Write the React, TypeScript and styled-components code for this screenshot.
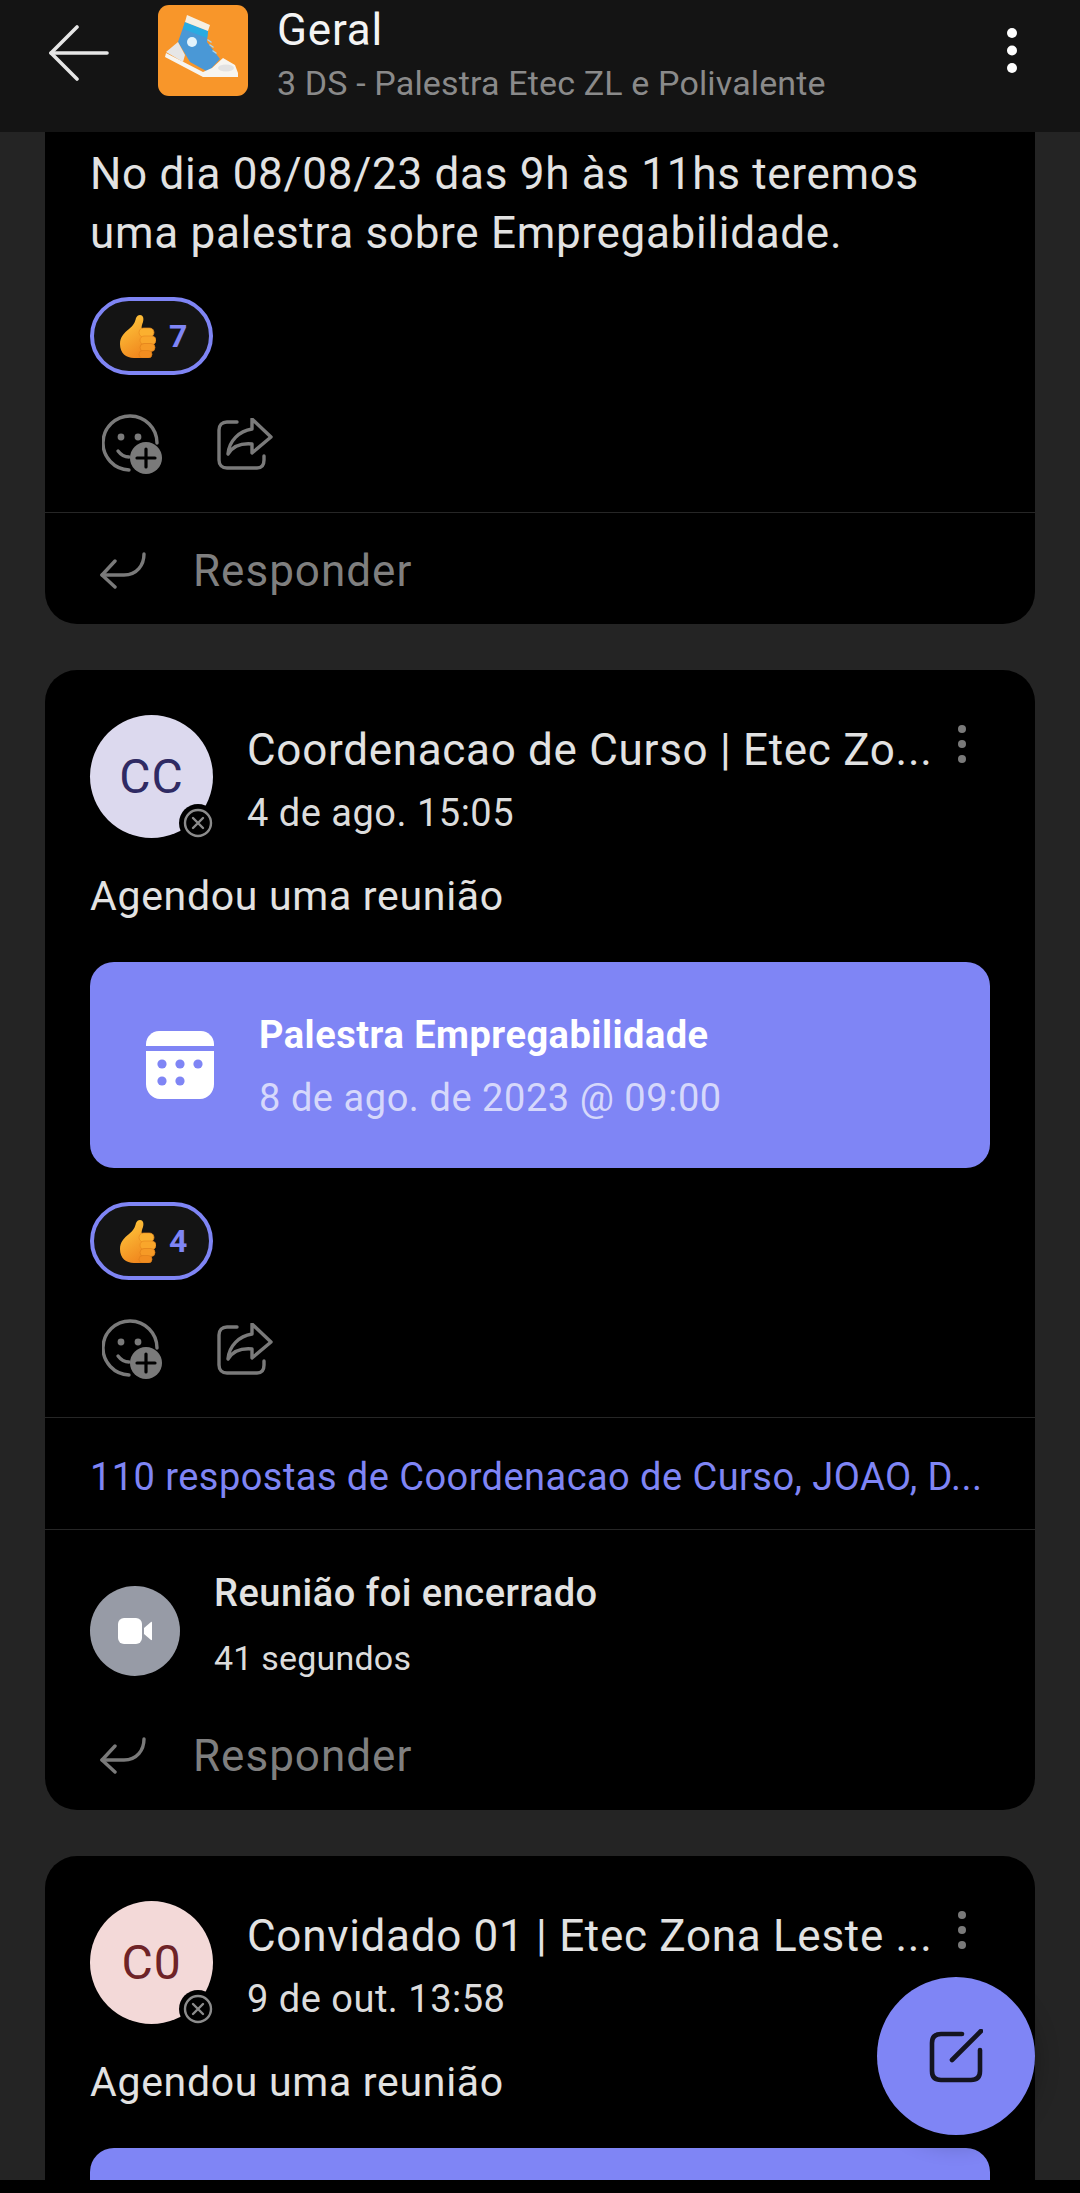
import React from 'react'
import styled, { createGlobalStyle } from 'styled-components'

const Global = createGlobalStyle`
    html, body {
        margin: 0;
        padding: 0;
        background: #000;
    }
    * {
        box-sizing: border-box;
    }
`

const ACCENT = '#7f85f5'

const BackIcon = () => (
    <svg width="60" height="56" viewBox="0 0 60 56" fill="none" stroke="#e6e6e6" strokeWidth="3.6" strokeLinecap="round" strokeLinejoin="round">
        <path d="M58 28H2" />
        <path d="M28 2L2 28L28 54" />
    </svg>
)

const SneakerLogo = () => (
    <svg width="90" height="91" viewBox="0 0 90 91">
        <rect width="90" height="91" rx="11" fill="#f8962a" />
        <path d="M27 17L50 26L49 37L62 54L50 67L32 57L20 37Z" fill="#4a98d6" />
        <path d="M27 17L50 26L49 33L25 24Z" fill="#29abe2" />
        <path d="M29 10L52 20L50 26L27 17Z" fill="#f5efe2" />
        <path d="M8 47L20 37L27 50L25 57Z" fill="#e6e6e6" />
        <path d="M8 48L45 67L54 63L65 53L77 60L80 68V72H45L7 52Z" fill="#f7f5f0" />
        <ellipse cx="68" cy="63" rx="8" ry="3.5" fill="#e2e2e2" />
        <circle cx="34" cy="37" r="5" fill="#e3f3fb" />
        <path d="M50 35L53 37M52 40L55 42M55 46L58 48" stroke="#a9d6f0" strokeWidth="1.500" strokeLinecap="round" />
    </svg>
)

const MoreDots = ({ r, step, color }: { r: number; step: number; color: string }) => (
    <svg width={r * 2} height={r * 2 + step * 2} fill={color}>
        <circle cx={r} cy={r} r={r} />
        <circle cx={r} cy={r + step} r={r} />
        <circle cx={r} cy={r + step * 2} r={r} />
    </svg>
)

const ThumbEmoji = () => (
    <svg width="36" height="44" viewBox="0 0 36 44">
        <defs>
            <linearGradient id="thumbFill" x1="0.3" y1="0" x2="0.7" y2="1">
                <stop offset="0" stopColor="#ffc73c" />
                <stop offset="1" stopColor="#f0861d" />
            </linearGradient>
        </defs>
        <path d="M20 1C23 1 24 4 23 8C22 11 21 13 22 15L26 44H14C6 44 0 39 0 30C0 23 4 19 9 15C14 11 15 8 16 4C17 2 18 1 20 1Z" fill="url(#thumbFill)" />
        <rect x="19" y="14" width="15" height="9" rx="4.500" fill="#fbb02f" stroke="#e8891f" strokeWidth="0.700" />
        <rect x="20" y="22" width="16" height="8.500" rx="4.200" fill="#f9a62b" stroke="#e8891f" strokeWidth="0.700" />
        <rect x="20" y="29.500" width="15" height="8" rx="4" fill="#f69a26" stroke="#e07f1a" strokeWidth="0.700" />
        <rect x="19" y="36.500" width="13" height="7.500" rx="3.700" fill="#f18d20" stroke="#e07f1a" strokeWidth="0.700" />
    </svg>
)

const AddReactionIcon = () => (
    <svg width="60" height="60" viewBox="0 0 60 60" fill="none">
        <path d="M27 56A27 27 0 1 1 55 29" stroke="#7a7a7a" strokeWidth="3.400" strokeLinecap="round" />
        <circle cx="19" cy="23" r="3.400" fill="#7a7a7a" />
        <circle cx="36" cy="23" r="3.400" fill="#7a7a7a" />
        <path d="M16 37C19 41 23 43 27 43" stroke="#7a7a7a" strokeWidth="3.400" strokeLinecap="round" />
        <circle cx="44" cy="44" r="16" fill="#7a7a7a" />
        <path d="M44 35V53M35 44H53" stroke="#000" strokeWidth="3.200" strokeLinecap="round" />
    </svg>
)

const ShareIcon = () => (
    <svg width="56" height="52" viewBox="0 0 56 52" fill="none" stroke="#7a7a7a" strokeWidth="3.400" strokeLinecap="round" strokeLinejoin="round">
        <path d="M20 4H10C5 4 2 7 2 12V42C2 47 5 50 10 50H40C45 50 47 47 47 42V38" />
        <path d="M35 1L54 19L35 35V26C24 25 16 28 11 36C12 23 22 13 35 11Z" />
    </svg>
)

const ReplyIcon = () => (
    <svg width="46" height="38" viewBox="0 0 46 38" fill="none" stroke="#7a7a7a" strokeWidth="3.400" strokeLinecap="round" strokeLinejoin="round">
        <path d="M44 2C44 13 37 23 24 23H2" />
        <path d="M15 9L2 23L15 35" />
    </svg>
)

const CalendarIcon = () => (
    <svg width="68" height="68" viewBox="0 0 68 68" fill="#fff">
        <path d="M13 0H55C62 0 68 6 68 13V15H0V13C0 6 6 0 13 0Z" />
        <path d="M0 20H68V53C68 61 62 68 54 68H14C6 68 0 61 0 53Z" />
        <g fill={ACCENT}>
            <circle cx="16" cy="33" r="4.600" />
            <circle cx="34" cy="33" r="4.600" />
            <circle cx="52" cy="33" r="4.600" />
            <circle cx="16" cy="50" r="4.600" />
            <circle cx="34" cy="50" r="4.600" />
        </g>
    </svg>
)

const VideoIcon = () => (
    <svg width="34" height="26" viewBox="0 0 34 26" fill="#fff">
        <rect width="24" height="26" rx="6" />
        <path d="M26 10L33 4C33.600 3.600 34 4 34 4.600V21.400C34 22 33.600 22.400 33 22L26 16Z" />
    </svg>
)

const ComposeIcon = () => (
    <svg width="54" height="54" viewBox="0 0 54 54" fill="none" stroke="#141420" strokeWidth="4.600" strokeLinecap="round" strokeLinejoin="round">
        <path d="M33 5H12C6 5 3 8 3 14V42C3 48 6 51 12 51H42C48 51 51 48 51 42V21" />
        <path d="M52 2L23 31" />
    </svg>
)

const RemovedIcon = () => (
    <svg width="30" height="30" viewBox="0 0 30 30" fill="none" stroke="#8c8c8c" strokeWidth="2.400" strokeLinecap="round">
        <circle cx="15" cy="15" r="13" />
        <path d="M10 10L20 20M20 10L10 20" />
    </svg>
)

const App = () => {
    return (
        <Screen>
            <Global />
            <Header>
                <BackButton><BackIcon /></BackButton>
                <SneakerLogo />
                <HeaderText>
                    <ChannelName>Geral</ChannelName>
                    <TeamName>3 DS - Palestra Etec ZL e Polivalente</TeamName>
                </HeaderText>
                <HeaderMenu><MoreDots r={5} step={17.5} color="#fff" /></HeaderMenu>
            </Header>
            <Feed>
                <Card $cropped>
                    <Message>No dia 08/08/23 das 9h às 11hs teremos<br />uma palestra sobre Empregabilidade.</Message>
                    <Reaction count={7} />
                    <Actions />
                    <Divider />
                    <ReplyRow $tall />
                </Card>
                <Card>
                    <Author initials="CC" bg="#dcd9ee" fg="#2f2a63" name="Coordenacao de Curso | Etec Zo..." date="4 de ago. 15:05" />
                    <Scheduled>Agendou uma reunião</Scheduled>
                    <MeetingCard>
                        <CalendarIcon />
                        <MeetingText>
                            <MeetingTitle>Palestra Empregabilidade</MeetingTitle>
                            <MeetingDate>8 de ago. de 2023 @ 09:00</MeetingDate>
                        </MeetingText>
                    </MeetingCard>
                    <Reaction count={4} />
                    <Actions />
                    <Divider />
                    <RepliesLink>110 respostas de Coordenacao de Curso, JOAO, D...</RepliesLink>
                    <Divider />
                    <EndedRow>
                        <EndedBadge><VideoIcon /></EndedBadge>
                        <EndedText>
                            <EndedTitle>Reunião foi encerrado</EndedTitle>
                            <EndedSub>41 segundos</EndedSub>
                        </EndedText>
                    </EndedRow>
                    <ReplyRow />
                </Card>
                <Card>
                    <Author initials="C0" bg="#f3d9d8" fg="#6e2327" name="Convidado 01 | Etec Zona Leste ..." date="9 de out. 13:58" />
                    <Scheduled>Agendou uma reunião</Scheduled>
                    <MeetingCard />
                </Card>
            </Feed>
            <BottomEdge />
            <Fab><ComposeIcon /></Fab>
        </Screen>
    )
}

const Reaction = ({ count }: { count: number }) => (
    <Pill>
        <ThumbEmoji />
        <PillCount>{count}</PillCount>
    </Pill>
)

const Actions = () => (
    <ActionRow>
        <AddReactionIcon />
        <ShareIcon />
    </ActionRow>
)

const ReplyRow = ({ $tall }: { $tall?: boolean }) => (
    <Reply $tall={$tall}>
        <ReplyIcon />
        <ReplyLabel>Responder</ReplyLabel>
    </Reply>
)

const Author = (props: { initials: string; bg: string; fg: string; name: string; date: string }) => (
    <AuthorRow>
        <Avatar $bg={props.bg} $fg={props.fg}>
            {props.initials}
            <AvatarBadge><RemovedIcon /></AvatarBadge>
        </Avatar>
        <AuthorText>
            <AuthorName>{props.name}</AuthorName>
            <PostDate>{props.date}</PostDate>
        </AuthorText>
        <PostMenu><MoreDots r={4} step={15} color="#7a7a7a" /></PostMenu>
    </AuthorRow>
)

const Screen = styled.div`
    position: relative;
    display: flex;
    flex-direction: column;
    width: 1080px;
    height: 2193px;
    overflow: hidden;
    background: #242424;
    font-family: Roboto, "Liberation Sans", sans-serif;
    color: #e2e2e2;
`

const Header = styled.header`
    display: flex;
    flex: none;
    height: 132px;
    padding-top: 5px;
    background: #141414;
`

const BackButton = styled.div`
    width: 158px;
    padding: 20px 0 0 49px;
`

const HeaderText = styled.div`
    display: flex;
    flex: 1;
    flex-direction: column;
    padding-left: 29px;
`

const ChannelName = styled.div`
    font-size: 44px;
    line-height: 50px;
    letter-spacing: 0.800px;
    color: #f4f4f4;
`

const TeamName = styled.div`
    margin-top: 3px;
    font-size: 34px;
    line-height: 50px;
    letter-spacing: 0.150px;
    color: #8a8a8a;
`

const HeaderMenu = styled.div`
    width: 73px;
    padding-top: 23px;
`

const Feed = styled.main`
    display: flex;
    flex: 1;
    flex-direction: column;
    gap: 46px;
    min-height: 0;
    overflow: hidden;
    padding: 0 45px;
`

const Card = styled.article<{ $cropped?: boolean }>`
    flex: none;
    padding-top: ${p => (p.$cropped ? '0' : '45px')};
    border-radius: ${p => (p.$cropped ? '0 0 32px 32px' : '32px')};
    background: #000;
`

const Message = styled.p`
    margin: 0;
    padding: 13px 45px 0;
    font-size: 44px;
    line-height: 59px;
    letter-spacing: 0.700px;
    color: #e2e2e2;
`

const Pill = styled.div`
    display: flex;
    align-items: center;
    gap: 13px;
    width: 123px;
    height: 78px;
    margin: 34px 0 0 45px;
    padding-left: 26px;
    border: 4px solid ${ACCENT};
    border-radius: 39px;
    background: #141414;
`

const PillCount = styled.span`
    font-size: 32px;
    font-weight: 700;
    color: ${ACCENT};
`

const ActionRow = styled.div`
    display: flex;
    align-items: center;
    gap: 55px;
    height: 137px;
    padding-left: 57px;
`

const Divider = styled.hr`
    height: 1px;
    margin: 0;
    border: 0;
    background: #262626;
`

const Reply = styled.div<{ $tall?: boolean }>`
    display: flex;
    align-items: center;
    gap: 47px;
    height: ${p => (p.$tall ? '111px' : '108px')};
    padding: ${p => (p.$tall ? '5px' : '0')} 0 0 55px;
`

const ReplyLabel = styled.span`
    font-size: 44px;
    letter-spacing: 1px;
    color: #7f7f7f;
`

const AuthorRow = styled.div`
    display: flex;
    align-items: flex-start;
    padding: 0 69px 0 45px;
`

const Avatar = styled.div<{ $bg: string; $fg: string }>`
    position: relative;
    display: flex;
    flex: none;
    align-items: center;
    justify-content: center;
    width: 123px;
    height: 123px;
    border-radius: 50%;
    background: ${p => p.$bg};
    font-size: 48px;
    letter-spacing: 1px;
    color: ${p => p.$fg};
`

const AvatarBadge = styled.span`
    position: absolute;
    right: -4px;
    bottom: -4px;
    display: flex;
    align-items: center;
    justify-content: center;
    width: 38px;
    height: 38px;
    border-radius: 50%;
    background: #000;
`

const AuthorText = styled.div`
    flex: 1;
    min-width: 0;
    padding-left: 34px;
`

const AuthorName = styled.div`
    padding-top: 7px;
    font-size: 44px;
    line-height: 56px;
    letter-spacing: 0.700px;
    white-space: nowrap;
    color: #e2e2e2;
`

const PostDate = styled.div`
    margin-top: 12px;
    font-size: 38px;
    line-height: 46px;
    letter-spacing: 0.500px;
    color: #dcdcdc;
`

const PostMenu = styled.div`
    flex: none;
    width: 8px;
    padding-top: 10px;
`

const Scheduled = styled.p`
    margin: 0;
    padding: 32px 45px 0;
    font-size: 41px;
    line-height: 52px;
    letter-spacing: 0.700px;
    color: #e2e2e2;
`

const MeetingCard = styled.div`
    display: flex;
    align-items: center;
    gap: 45px;
    height: 206px;
    margin: 40px 45px 2px;
    padding-left: 56px;
    border-radius: 24px;
    background: ${ACCENT};
`

const MeetingText = styled.div`
    display: flex;
    flex-direction: column;
    gap: 21px;
    padding-top: 2px;
`

const MeetingTitle = styled.div`
    font-size: 38px;
    font-weight: 700;
    line-height: 42px;
    letter-spacing: 0.500px;
    color: #fff;
`

const MeetingDate = styled.div`
    font-size: 38px;
    line-height: 42px;
    letter-spacing: 0.550px;
    color: #d6d8fb;
`

const RepliesLink = styled.div`
    height: 111px;
    padding: 0 45px;
    font-size: 38px;
    line-height: 119px;
    letter-spacing: 0.450px;
    white-space: nowrap;
    color: ${ACCENT};
`

const EndedRow = styled.div`
    display: flex;
    align-items: flex-start;
    gap: 34px;
    height: 172px;
    padding: 56px 45px 0;
`

const EndedBadge = styled.div`
    display: flex;
    flex: none;
    align-items: center;
    justify-content: center;
    width: 90px;
    height: 90px;
    border-radius: 50%;
    background: #979ba6;
`

const EndedText = styled.div`
    margin-top: -15px;
`

const EndedTitle = styled.div`
    font-size: 38px;
    font-weight: 500;
    line-height: 44px;
    letter-spacing: 0.500px;
    color: #e2e2e2;
`

const EndedSub = styled.div`
    margin-top: 21px;
    font-size: 34px;
    line-height: 44px;
    letter-spacing: 0.200px;
    color: #dcdcdc;
`

const BottomEdge = styled.div`
    flex: none;
    height: 13px;
    background: #000;
`

const Fab = styled.button`
    position: absolute;
    top: 1977px;
    left: 877px;
    display: flex;
    align-items: center;
    justify-content: center;
    width: 158px;
    height: 158px;
    padding: 0;
    border: 0;
    border-radius: 50%;
    background: ${ACCENT};
    box-shadow: 0 6px 24px rgba(0, 0, 0, 0.3);
`

export default App
